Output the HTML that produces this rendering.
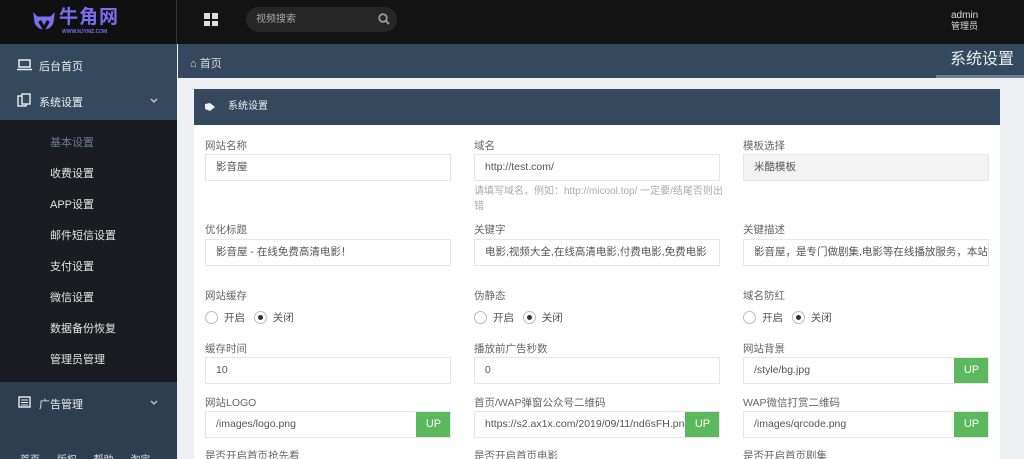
<!DOCTYPE html>
<html style="overflow:hidden"><head><meta charset="utf-8"><style>
*{margin:0;padding:0;box-sizing:border-box}
html,body{width:1024px;height:459px;overflow:hidden}
body{background:#eef0f3;font-family:"Liberation Sans","Noto Sans CJK SC",sans-serif;font-size:11px;color:#555;position:relative}
.abs{position:absolute}
.top{left:0;top:0;width:1024px;height:44px;background:#131313}
.logo{left:0;top:0;width:177px;height:44px;background:#101010;border-right:1px solid #333}
.side1{left:0;top:44px;width:177px;height:76px;background:#34495e}
.side2{left:0;top:120px;width:177px;height:262px;background:#1b1c21}
.side3{left:0;top:382px;width:177px;height:77px;background:#2c3e50}
.sm{position:absolute;left:50px;color:#e4e4e4;font-size:11px}
.crumb{left:178px;top:44px;width:846px;height:34px;background:#34495e}
.tab{left:936px;top:44px;width:88px;height:34px;color:#eee;font-size:16px;line-height:32px;padding-left:14px;border-bottom:3px solid #6c7f92}
.panel{left:194px;top:89px;width:806px;height:370px;background:#fff}
.ph{left:194px;top:89px;width:806px;height:36px;background:#34495e;color:#eee;line-height:36px;padding-left:34px;font-size:10px}
.lb{position:absolute;font-size:10.5px;color:#666}
.in{position:absolute;height:27px;border:1px solid #e6e6e6;background:#fff;font-size:10.5px;color:#555;line-height:25px;padding-left:10px;white-space:nowrap;overflow:hidden;width:246px}
.up{position:absolute;right:-1px;top:-1px;width:35px;height:27px;background:#5cb85c;color:#fff;text-align:center;line-height:27px;font-size:11px}
.rd{position:absolute;font-size:10.5px;color:#555;display:flex;align-items:center}
.c{width:13px;height:13px;border:1px solid #bbb;border-radius:50%;display:inline-block;margin-right:6px;position:relative}
.c.on:after{content:"";position:absolute;left:3px;top:3px;width:5px;height:5px;border-radius:50%;background:#333}
</style></head><body>
<div class="abs top"></div>
<div class="abs logo">
<svg class="abs" style="left:32px;top:10px" width="24" height="24" viewBox="0 0 22 22"><path d="M1 2 L5 6 L17 6 L21 2 L20 9 A9 9 0 1 1 2 9Z" fill="#7b6cf0"/><path d="M7 10 L11 17 L15 10" stroke="#101010" stroke-width="3" fill="none"/></svg>
<div class="abs" style="left:59px;top:7px;color:#7b6cf0;font-size:19px;font-weight:bold;letter-spacing:1px;line-height:22px">牛角网</div>
<div class="abs" style="left:62px;top:29px;color:#7b6cf0;font-size:5px;font-weight:bold">WWW.NJYMZ.COM</div>
</div>
<div class="abs" style="left:204px;top:13px;width:14px;height:13px;display:grid;grid-template-columns:6px 6px;gap:2px"><i style="background:#ddd"></i><i style="background:#ddd"></i><i style="background:#ddd"></i><i style="background:#ddd"></i></div>
<div class="abs" style="left:246px;top:7px;width:151px;height:25px;border-radius:13px;background:#262626;color:#aaa;font-size:10px;line-height:25px;padding-left:10px">视频搜索</div>
<svg class="abs" style="left:378px;top:13px" width="12" height="12"><circle cx="5" cy="5" r="3.8" stroke="#999" stroke-width="1.8" fill="none"/><path d="M8 8 L11 11" stroke="#999" stroke-width="2"/></svg>
<div class="abs" style="left:951px;top:10px;color:#ddd;font-size:10px;line-height:11px">admin<br><span style="font-size:9px">管理员</span></div>

<div class="abs side1"></div>
<div class="abs side2"></div>
<div class="abs side3"></div>
<svg class="abs" style="left:17px;top:59px" width="15" height="12"><rect x="2" y="1" width="11" height="7" stroke="#eee" stroke-width="1.5" fill="none"/><path d="M0 10.5H15" stroke="#eee" stroke-width="1.5"/></svg>
<div class="abs" style="left:39px;top:58px;color:#eee;font-size:11px">后台首页</div>
<svg class="abs" style="left:17px;top:93px" width="15" height="14"><rect x="1" y="3" width="8" height="10" stroke="#eee" stroke-width="1.4" fill="none"/><rect x="5" y="1" width="8" height="10" stroke="#eee" stroke-width="1.4" fill="#34495e"/></svg>
<div class="abs" style="left:39px;top:94px;color:#eee;font-size:11px">系统设置</div>
<svg class="abs" style="left:150px;top:98px" width="8" height="6"><path d="M1 1 L4 4 L7 1" stroke="#ccc" stroke-width="1.3" fill="none"/></svg>
<div class="sm" style="top:134px;color:#6b7a8f">基本设置</div>
<div class="sm" style="top:165px">收费设置</div>
<div class="sm" style="top:196px">APP设置</div>
<div class="sm" style="top:227px">邮件短信设置</div>
<div class="sm" style="top:258px">支付设置</div>
<div class="sm" style="top:289px">微信设置</div>
<div class="sm" style="top:320px">数据备份恢复</div>
<div class="sm" style="top:351px">管理员管理</div>
<svg class="abs" style="left:18px;top:396px" width="13" height="12"><rect x="1" y="1" width="11" height="10" stroke="#eee" stroke-width="1.4" fill="none"/><path d="M3 4H10M3 6.5H10M3 9H10" stroke="#eee"/></svg>
<div class="abs" style="left:39px;top:396px;color:#eee;font-size:11px">广告管理</div>
<svg class="abs" style="left:150px;top:400px" width="8" height="6"><path d="M1 1 L4 4 L7 1" stroke="#ccc" stroke-width="1.3" fill="none"/></svg>
<div class="abs" style="left:20px;top:451px;color:#ddd;font-size:10px;word-spacing:14px">首页 版权 帮助 淘宝</div>

<div class="abs crumb"></div>
<div class="abs" style="left:190px;top:55px;color:#ddd;font-size:11px">⌂ 首页</div>
<div class="abs tab">系统设置</div>
<div class="abs panel"></div>
<div class="abs ph">系统设置</div>
<svg class="abs" style="left:205px;top:103px" width="10" height="8"><path d="M0 1 L5 0 L10 4 L5 8 L0 6Z" fill="#eee"/></svg>

<div class="lb" style="left:205px;top:138px">网站名称</div>
<div class="in" style="left:205px;top:154px">影音屋</div>
<div class="lb" style="left:474px;top:138px">域名</div>
<div class="in" style="left:474px;top:154px">http://test.com/</div>
<div class="lb" style="left:474px;top:184px;color:#aaa;font-size:10px;width:250px;line-height:15px">请填写域名，例如：http://micool.top/ 一定要/结尾否则出错</div>
<div class="lb" style="left:743px;top:138px">模板选择</div>
<div class="in" style="left:743px;top:154px;background:#f3f3f3">米酷模板</div>

<div class="lb" style="left:205px;top:222px">优化标题</div>
<div class="in" style="left:205px;top:239px">影音屋 - 在线免费高清电影！</div>
<div class="lb" style="left:474px;top:222px">关键字</div>
<div class="in" style="left:474px;top:239px">电影,视频大全,在线高清电影,付费电影,免费电影</div>
<div class="lb" style="left:743px;top:222px">关键描述</div>
<div class="in" style="left:743px;top:239px">影音屋，是专门做剧集,电影等在线播放服务，本站</div>

<div class="lb" style="left:205px;top:288px">网站缓存</div>
<div class="rd" style="left:205px;top:310px"><i class="c"></i>开启&nbsp;&nbsp;&nbsp;<i class="c on"></i>关闭</div>
<div class="lb" style="left:474px;top:288px">伪静态</div>
<div class="rd" style="left:474px;top:310px"><i class="c"></i>开启&nbsp;&nbsp;&nbsp;<i class="c on"></i>关闭</div>
<div class="lb" style="left:743px;top:288px">域名防红</div>
<div class="rd" style="left:743px;top:310px"><i class="c"></i>开启&nbsp;&nbsp;&nbsp;<i class="c on"></i>关闭</div>

<div class="lb" style="left:205px;top:341px">缓存时间</div>
<div class="in" style="left:205px;top:357px">10</div>
<div class="lb" style="left:474px;top:341px">播放前广告秒数</div>
<div class="in" style="left:474px;top:357px">0</div>
<div class="lb" style="left:743px;top:341px">网站背景</div>
<div class="in" style="left:743px;top:357px">/style/bg.jpg<div class="up">UP</div></div>

<div class="lb" style="left:205px;top:395px">网站LOGO</div>
<div class="in" style="left:205px;top:411px">/images/logo.png<div class="up">UP</div></div>
<div class="lb" style="left:474px;top:395px">首页/WAP弹窗公众号二维码</div>
<div class="in" style="left:474px;top:411px">https://s2.ax1x.com/2019/09/11/nd6sFH.png<div class="up">UP</div></div>
<div class="lb" style="left:743px;top:395px">WAP微信打赏二维码</div>
<div class="in" style="left:743px;top:411px">/images/qrcode.png<div class="up">UP</div></div>

<div class="lb" style="left:205px;top:448px">是否开启首页抢先看</div>
<div class="lb" style="left:474px;top:448px">是否开启首页电影</div>
<div class="lb" style="left:743px;top:448px">是否开启首页剧集</div>
</body></html>
